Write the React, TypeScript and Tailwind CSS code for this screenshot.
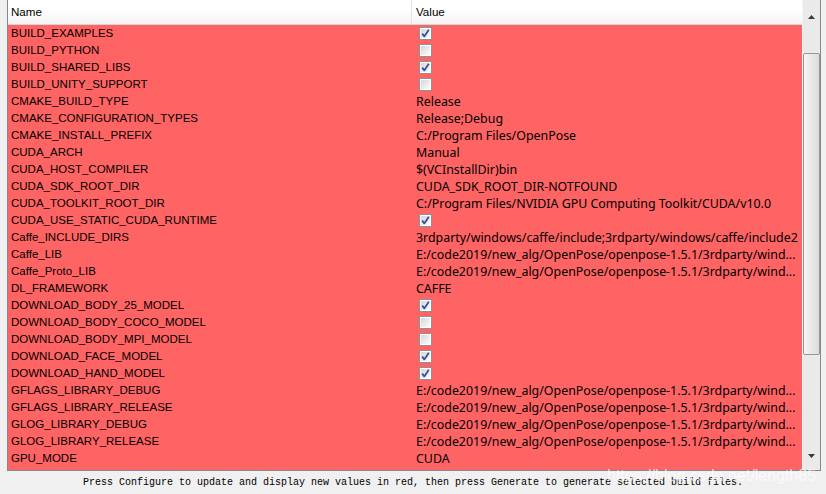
import React from 'react';

type Row = { name: string; value?: string; check?: boolean };

const LONG = 'E:/code2019/new_alg/OpenPose/openpose-1.5.1/3rdparty/wind...';

const ROWS: Row[] = [
  { name: 'BUILD_EXAMPLES', check: true },
  { name: 'BUILD_PYTHON', check: false },
  { name: 'BUILD_SHARED_LIBS', check: true },
  { name: 'BUILD_UNITY_SUPPORT', check: false },
  { name: 'CMAKE_BUILD_TYPE', value: 'Release' },
  { name: 'CMAKE_CONFIGURATION_TYPES', value: 'Release;Debug' },
  { name: 'CMAKE_INSTALL_PREFIX', value: 'C:/Program Files/OpenPose' },
  { name: 'CUDA_ARCH', value: 'Manual' },
  { name: 'CUDA_HOST_COMPILER', value: '$(VCInstallDir)bin' },
  { name: 'CUDA_SDK_ROOT_DIR', value: 'CUDA_SDK_ROOT_DIR-NOTFOUND' },
  { name: 'CUDA_TOOLKIT_ROOT_DIR', value: 'C:/Program Files/NVIDIA GPU Computing Toolkit/CUDA/v10.0' },
  { name: 'CUDA_USE_STATIC_CUDA_RUNTIME', check: true },
  { name: 'Caffe_INCLUDE_DIRS', value: '3rdparty/windows/caffe/include;3rdparty/windows/caffe/include2' },
  { name: 'Caffe_LIB', value: LONG },
  { name: 'Caffe_Proto_LIB', value: LONG },
  { name: 'DL_FRAMEWORK', value: 'CAFFE' },
  { name: 'DOWNLOAD_BODY_25_MODEL', check: true },
  { name: 'DOWNLOAD_BODY_COCO_MODEL', check: false },
  { name: 'DOWNLOAD_BODY_MPI_MODEL', check: false },
  { name: 'DOWNLOAD_FACE_MODEL', check: true },
  { name: 'DOWNLOAD_HAND_MODEL', check: true },
  { name: 'GFLAGS_LIBRARY_DEBUG', value: LONG },
  { name: 'GFLAGS_LIBRARY_RELEASE', value: LONG },
  { name: 'GLOG_LIBRARY_DEBUG', value: LONG },
  { name: 'GLOG_LIBRARY_RELEASE', value: LONG },
  { name: 'GPU_MODE', value: 'CUDA' },
];

function CheckBox({ on }: { on: boolean }) {
  return (
    <svg width="13" height="13" viewBox="0 0 13 13" className="ml-[7px] shrink-0">
      <defs>
        <linearGradient id="cbg" x1="0" y1="0" x2="1" y2="1">
          <stop offset="0" stopColor="#d8d8d8" />
          <stop offset="1" stopColor="#fbfbfb" />
        </linearGradient>
      </defs>
      <rect x="0.5" y="0.5" width="12" height="12" fill="#fff" stroke="#8e9294" />
      <rect x="2" y="2" width="9" height="9" fill="url(#cbg)" />
      {on && (
        <path d="M3.2 6.6 L5.3 9.4 L9.8 2.8" fill="none" stroke="#3b4f9c" strokeWidth="1.8" strokeLinejoin="round" />
      )}
    </svg>
  );
}

export default function App() {
  return (
    <div
      className="relative w-[826px] h-[494px] bg-[#f0f0f0] text-black overflow-hidden"
      style={{ fontFamily: '"Liberation Sans", Arial, sans-serif' }}
    >
      {/* property table */}
      <div className="ml-[7px] w-[814px] h-[471px] flex border-x border-b border-[#828790]">
        <div className="flex-1 flex flex-col min-w-0">
          <div className="h-[25px] flex border-b border-[#d5d5d5] bg-gradient-to-b from-white from-40% to-[#f3f3f3] text-[11.6px] leading-[24px]">
            <div className="w-[404px] pl-[3px] border-r border-[#e2e2e2]">Name</div>
            <div className="flex-1 pl-[4px]">Value</div>
          </div>
          <div className="flex-1 bg-[#ff6464] text-[11.5px]">
            {ROWS.map((r) => (
              <div key={r.name} className="h-[17px] flex items-center leading-[17px]">
                <div className="w-[404px] pl-[3px] whitespace-nowrap">{r.name}</div>
                <div className="flex-1 min-w-0 flex items-center">
                  {r.check === undefined ? (
                    <span
                      className="pl-[4px] whitespace-nowrap overflow-hidden text-[12.4px] leading-[17px]"
                      style={{ fontFamily: '"Noto Sans", "Liberation Sans", sans-serif' }}
                    >
                      {r.value}
                    </span>
                  ) : (
                    <CheckBox on={r.check} />
                  )}
                </div>
              </div>
            ))}
          </div>
        </div>

        {/* vertical scrollbar */}
        <div className="w-[18px] flex flex-col bg-[#eaeaea] border-l border-[#f4f4f4]">
          <div className="h-[35px] flex items-start justify-center pt-[15px]">
            <svg width="7" height="4" viewBox="0 0 7 4">
              <path d="M0 4 L3.5 0 L7 4 Z" fill="#3a3a3a" />
            </svg>
          </div>
          <div className="mt-[18px] h-[302px] rounded-[2px] border border-[#979797] bg-gradient-to-r from-[#f5f5f5] to-[#dcdcdc]" />
          <div className="flex-1" />
          <div className="h-[18px] flex items-start justify-center pt-[2px]">
            <svg width="7" height="4" viewBox="0 0 7 4">
              <path d="M0 0 L7 0 L3.5 4 Z" fill="#3a3a3a" />
            </svg>
          </div>
        </div>
      </div>

      {/* status line */}
      <div
        className="h-[23px] flex items-center justify-center text-[10px] leading-[23px] whitespace-nowrap"
        style={{ fontFamily: '"Liberation Mono", "Courier New", monospace' }}
      >
        Press Configure to update and display new values in red, then press Generate to generate selected build files.
      </div>

      {/* watermark */}
      <div className="absolute left-[607px] top-[464px] text-[16px] text-white/70 whitespace-nowrap pointer-events-none">
        https://blog.csdn.net/length85
      </div>
    </div>
  );
}
